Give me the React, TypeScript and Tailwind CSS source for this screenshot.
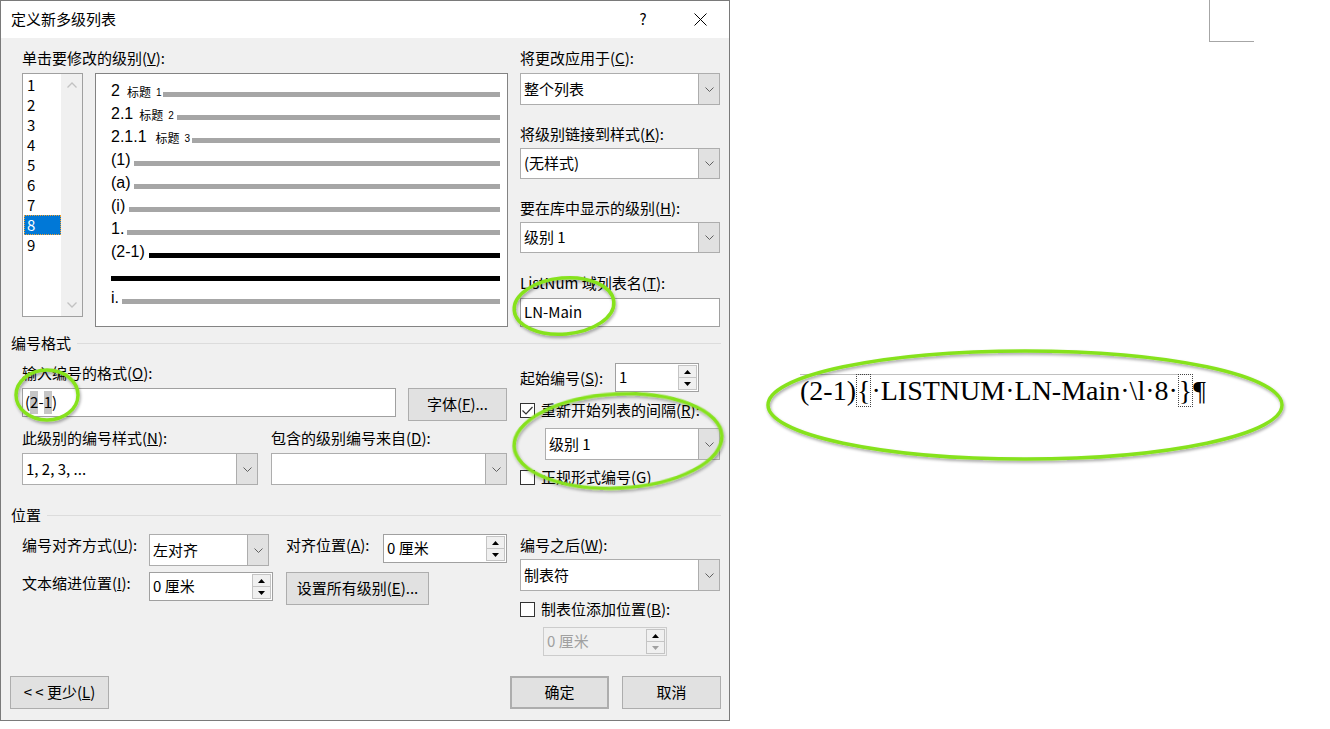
import React from 'react';

const Chevron = () => (
  <svg width="9" height="5" viewBox="0 0 9 5" className="block">
    <path d="M0.5 0.5L4.5 4.5L8.5 0.5" fill="none" stroke="#606060" strokeWidth="1" />
  </svg>
);

const Tri = ({ up, color = '#000' }: { up?: boolean; color?: string }) => (
  <svg width="7" height="4" viewBox="0 0 7 4" className="block">
    <path d={up ? 'M0 4L3.5 0L7 4Z' : 'M0 0L3.5 4L7 0Z'} fill={color} />
  </svg>
);

const Label = ({ children, className = '' }: { children: React.ReactNode; className?: string }) => (
  <div className={`h-[20px] leading-[20px] whitespace-nowrap ${className}`}>{children}</div>
);

const Select = ({ text, className = '' }: { text: string; className?: string }) => (
  <div className={`flex border border-[#adadad] bg-white ${className}`}>
    <div className="flex-1 flex items-center pl-[3px] whitespace-nowrap overflow-hidden">{text}</div>
    <div className="w-[21px] bg-[#e1e1e1] border-l border-[#adadad] flex items-center justify-center">
      <Chevron />
    </div>
  </div>
);

const TextBox = ({ children, className = '' }: { children?: React.ReactNode; className?: string }) => (
  <div className={`flex items-center border border-[#a0a0a0] bg-white pl-[2px] whitespace-nowrap ${className}`}>{children}</div>
);

const Spinner = ({ text, className = '', disabled }: { text: string; className?: string; disabled?: boolean }) => (
  <div
    className={`flex border ${disabled ? 'border-[#cccccc] bg-[#f0f0f0] text-[#a0a0a0]' : 'border-[#a0a0a0] bg-white'} ${className}`}
  >
    <div className="flex-1 flex items-center pl-[3px] whitespace-nowrap">{text}</div>
    <div className="flex flex-col w-[20px] py-[1px] pr-[1px]">
      <div className="flex-1 border border-[#c4c4c4] bg-[#f0f0f0] flex items-center justify-center">
        <Tri up />
      </div>
      <div className="flex-1 border border-t-0 border-[#c4c4c4] bg-[#f0f0f0] flex items-center justify-center">
        <Tri color={disabled ? '#a0a0a0' : '#000'} />
      </div>
    </div>
  </div>
);

const Check = ({ checked }: { checked?: boolean }) => (
  <div className="w-[15px] h-[15px] border border-[#333333] bg-white flex items-center justify-center shrink-0">
    {checked && (
      <svg width="11" height="9" viewBox="0 0 11 9" className="block">
        <path d="M0.5 4.5L4 8L10.5 1" stroke="#333" fill="none" strokeWidth="1.2" />
      </svg>
    )}
  </div>
);

const Btn = ({ children, className = '' }: { children: React.ReactNode; className?: string }) => (
  <div className={`flex items-center justify-center border border-[#adadad] bg-[#e1e1e1] whitespace-nowrap ${className}`}>
    {children}
  </div>
);

const Bar = ({ black, className = '' }: { black?: boolean; className?: string }) => (
  <div className={`flex-1 h-[5px] ${black ? 'bg-black' : 'bg-[#a6a6a6]'} ${className}`} />
);

const Big = ({ children }: { children: React.ReactNode }) => (
  <span className="text-[16px] leading-[16px] mb-[-2px] font-['Liberation_Sans',Arial,sans-serif] whitespace-pre">
    {children}
  </span>
);

const Heading = ({ n, ml }: { n: string; ml: string }) => (
  <>
    <span className={`text-[12px] leading-[12px] mb-[-1px] ${ml}`}>标题</span>
    <span className="ml-[5px] text-[10px] leading-[10px] mb-[-1px] font-['Liberation_Sans',Arial,sans-serif]">{n}</span>
  </>
);

export default function App() {
  return (
    <div className="relative w-[1330px] h-[729px] overflow-hidden bg-white flex font-['Noto_Sans_CJK_SC','Noto_Sans',sans-serif] text-black">
      {/* dialog */}
      <div className="w-[730px] h-[721px] shrink-0 border border-[#7a7a7a] bg-[#f0f0f0] flex flex-col text-[15px]">
        <div className="h-[37px] bg-white flex items-center pl-[10px]">
          <div className="flex-1">定义新多级列表</div>
          <div className="w-[46px] text-center">?</div>
          <div className="w-[46px] flex justify-center mr-[6px] ml-[11px]">
            <svg width="13" height="13" viewBox="0 0 13 13" className="block">
              <path d="M0.5 0.5L12.5 12.5M12.5 0.5L0.5 12.5" stroke="#000" strokeWidth="1" />
            </svg>
          </div>
        </div>

        {/* levels + preview + right column */}
        <div className="flex pt-[10px] pl-[21px]">
          <div className="w-[486px]">
            <Label>
              单击要修改的级别(<u>V</u>):
            </Label>
            <div className="flex mt-[5px]">
              <div className="w-[61px] h-[244px] border border-[#a0a0a0] bg-white flex">
                <div className="w-[38px] pt-[1px] pl-[1px]">
                  {['1', '2', '3', '4', '5', '6', '7', '8', '9'].map((n) =>
                    n === '8' ? (
                      <div key={n} className="h-[20px] leading-[18px] pl-[2px] bg-[#0078d7] text-white border border-dotted border-[#f0a030]">
                        {n}
                      </div>
                    ) : (
                      <div key={n} className="h-[20px] leading-[20px] pl-[3px]">
                        {n}
                      </div>
                    )
                  )}
                </div>
                <div className="flex-1 bg-[#f0f0f0] flex flex-col items-center justify-between py-[8px]">
                  <svg width="10" height="6" viewBox="0 0 10 6" className="block">
                    <path d="M0.5 5.5L5 1L9.5 5.5" fill="none" stroke="#c2c2c2" strokeWidth="1.3" />
                  </svg>
                  <svg width="10" height="6" viewBox="0 0 10 6" className="block">
                    <path d="M0.5 0.5L5 5L9.5 0.5" fill="none" stroke="#c2c2c2" strokeWidth="1.3" />
                  </svg>
                </div>
              </div>
              <div className="ml-[12px] w-[413px] h-[254px] border border-[#838383] bg-white pl-[15px] pr-[7px]">
                <div className="flex items-end h-[23px]">
                  <Big>2</Big>
                  <Heading n="1" ml="ml-[7px]" />
                  <Bar className="ml-[2px]" />
                </div>
                <div className="flex items-end h-[23px]">
                  <Big>2.1</Big>
                  <Heading n="2" ml="ml-[6px]" />
                  <Bar className="ml-[3px]" />
                </div>
                <div className="flex items-end h-[23px]">
                  <Big>2.1.1</Big>
                  <Heading n="3" ml="ml-[9px]" />
                  <Bar className="ml-[2px]" />
                </div>
                <div className="flex items-end h-[23px]">
                  <Big>(1)</Big>
                  <Bar className="ml-[3px]" />
                </div>
                <div className="flex items-end h-[23px]">
                  <Big>(a)</Big>
                  <Bar className="ml-[3px]" />
                </div>
                <div className="flex items-end h-[23px]">
                  <Big>(i)</Big>
                  <Bar className="ml-[4px]" />
                </div>
                <div className="flex items-end h-[23px]">
                  <Big>1.</Big>
                  <Bar className="ml-[3px]" />
                </div>
                <div className="flex items-end h-[23px]">
                  <Big>(2-1)</Big>
                  <Bar black className="ml-[4px]" />
                </div>
                <div className="flex items-end h-[23px]">
                  <Bar black />
                </div>
                <div className="flex items-end h-[23px]">
                  <Big>i.</Big>
                  <Bar className="ml-[3px]" />
                </div>
              </div>
            </div>
          </div>

          <div className="ml-[12px] w-[200px]">
            <Label>
              将更改应用于(<u>C</u>):
            </Label>
            <Select className="mt-[5px] h-[32px]" text="整个列表" />
            <Label className="mt-[19px]">
              将级别链接到样式(<u>K</u>):
            </Label>
            <Select className="mt-[4px] h-[31px]" text="(无样式)" />
            <Label className="mt-[19px]">
              要在库中显示的级别(<u>H</u>):
            </Label>
            <Select className="mt-[4px] h-[31px]" text="级别 1" />
            <Label className="mt-[20px]">
              ListNum 域列表名(<u>T</u>):
            </Label>
            <TextBox className="mt-[5px] h-[29px] pl-[3px]">LN-Main</TextBox>
          </div>
        </div>

        {/* number format */}
        <div className="mt-[6px] h-[20px] flex items-center pl-[10px] pr-[8px]">
          <span className="leading-[20px]">编号格式</span>
          <div className="flex-1 h-px bg-[#dcdcdc] ml-[6px]" />
        </div>
        <div className="flex pl-[21px] pr-[8px]">
          <div className="w-[486px]">
            <Label className="mt-[10px]">
              输入编号的格式(<u>O</u>):
            </Label>
            <div className="flex mt-[5px] items-start">
              <TextBox className="w-[374px] h-[29px]">
                (<span className="bg-[#c6c6c6]">2</span>-<span className="bg-[#c6c6c6]">1</span>)
              </TextBox>
              <Btn className="ml-[12px] w-[99px] h-[33px]">
                字体(<u>F</u>)...
              </Btn>
            </div>
            <div className="flex mt-[7px]">
              <Label className="w-[249px]">
                此级别的编号样式(<u>N</u>):
              </Label>
              <Label>
                包含的级别编号来自(<u>D</u>):
              </Label>
            </div>
            <div className="flex mt-[5px]">
              <Select className="w-[236px] h-[32px]" text="1, 2, 3, ..." />
              <Select className="ml-[13px] w-[236px] h-[32px]" text="" />
            </div>
          </div>
          <div className="ml-[12px] w-[200px]">
            <div className="flex items-center mt-[10px] h-[29px]">
              <Label className="w-[95px]">
                起始编号(<u>S</u>):
              </Label>
              <Spinner className="w-[84px] h-[29px]" text="1" />
            </div>
            <div className="flex items-center mt-[8px] h-[20px]">
              <Check checked />
              <Label className="ml-[6px]">
                重新开始列表的间隔(<u>R</u>):
              </Label>
            </div>
            <Select className="mt-[8px] ml-[25px] w-[175px] h-[32px]" text="级别 1" />
            <div className="flex items-center mt-[7px] h-[20px]">
              <Check />
              <Label className="ml-[6px]">正规形式编号(G)</Label>
            </div>
          </div>
        </div>

        {/* position */}
        <div className="mt-[18px] h-[20px] flex items-center pl-[10px] pr-[8px]">
          <span className="leading-[20px]">位置</span>
          <div className="flex-1 h-px bg-[#dcdcdc] ml-[6px]" />
        </div>
        <div className="flex pl-[21px] pr-[8px]">
          <div className="w-[486px]">
            <div className="flex items-start mt-[9px]">
              <Label className="w-[127px] mt-[1px]">
                编号对齐方式(<u>U</u>):
              </Label>
              <Select className="w-[120px] h-[32px]" text="左对齐" />
              <Label className="ml-[17px] w-[97px] mt-[1px]">
                对齐位置(<u>A</u>):
              </Label>
              <Spinner className="w-[124px] h-[29px]" text="0 厘米" />
            </div>
            <div className="flex items-start mt-[6px]">
              <Label className="w-[127px] mt-[1px]">
                文本缩进位置(<u>I</u>):
              </Label>
              <Spinner className="w-[124px] h-[29px]" text="0 厘米" />
              <Btn className="ml-[13px] w-[143px] h-[33px]">
                设置所有级别(<u>E</u>)...
              </Btn>
            </div>
          </div>
          <div className="ml-[12px] w-[200px]">
            <Label className="mt-[10px]">
              编号之后(<u>W</u>):
            </Label>
            <Select className="mt-[4px] h-[32px]" text="制表符" />
            <div className="flex items-center mt-[8px] h-[20px]">
              <Check />
              <Label className="ml-[6px]">
                制表位添加位置(<u>B</u>):
              </Label>
            </div>
            <Spinner disabled className="mt-[8px] ml-[23px] w-[124px] h-[29px]" text="0 厘米" />
          </div>
        </div>

        <div className="mt-auto flex pl-[9px] pr-[8px] pb-[11px]">
          <Btn className="w-[99px] h-[33px]">
            {'< < 更少('}
            <u>L</u>)
          </Btn>
          <Btn className="ml-auto w-[99px] h-[33px] border-2 border-[#0078d7]">确定</Btn>
          <Btn className="ml-[13px] w-[99px] h-[33px]">取消</Btn>
        </div>
      </div>

      {/* document */}
      <div className="flex-1">
        <div className="ml-[479px] w-[45px] h-[42px] border-l border-b border-[#a6a6a6]" />
        <div className="mt-[335px] ml-[70px] text-[28px] leading-[28px] font-['Liberation_Serif','Times_New_Roman',serif] whitespace-nowrap">
          <span className="border-t border-[#c0c0c0]">
            (2-1)<span className="border border-dotted border-[#444444]">{'{'}</span>·LISTNUM·LN-Main·\l·8·
          </span>
          <span className="border border-dotted border-[#444444]">{'}'}</span>¶
        </div>
      </div>

      {/* annotation ellipses */}
      <svg className="absolute left-0 top-0 pointer-events-none" width="1330" height="729">
        <defs>
          <filter id="sh" x="-10%" y="-20%" width="120%" height="150%">
            <feDropShadow dx="1" dy="2" stdDeviation="1.5" floodColor="#000" floodOpacity="0.35" />
          </filter>
        </defs>
        <g fill="none" stroke="#86e21e" strokeWidth="3.5" filter="url(#sh)">
          <ellipse cx="564" cy="306" rx="50" ry="28" transform="rotate(-5 564 306)" />
          <ellipse cx="47" cy="395" rx="31" ry="25" />
          <ellipse cx="618" cy="441" rx="104" ry="47" transform="rotate(-3 618 441)" />
          <ellipse cx="1025" cy="405" rx="257" ry="54" />
        </g>
      </svg>
    </div>
  );
}
